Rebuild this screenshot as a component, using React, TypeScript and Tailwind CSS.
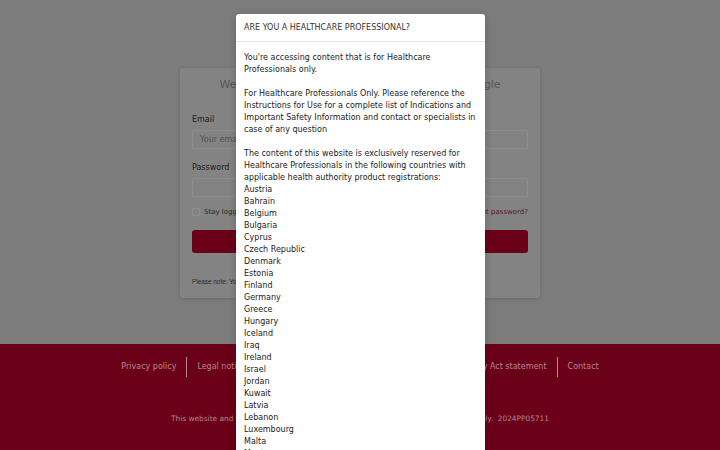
import React from 'react';

const countries = [
  'Austria', 'Bahrain', 'Belgium', 'Bulgaria', 'Cyprus', 'Czech Republic', 'Denmark', 'Estonia',
  'Finland', 'Germany', 'Greece', 'Hungary', 'Iceland', 'Iraq', 'Ireland', 'Israel', 'Jordan',
  'Kuwait', 'Latvia', 'Lebanon', 'Luxembourg', 'Malta', 'Montenegro', 'Netherlands', 'Norway',
];

const footerLinks = ['Privacy policy', 'Legal notice', 'Cookie notice', 'Cookie settings', 'Modern Slavery Act statement', 'Contact'];

function LoginCard() {
  return (
    <div className="w-[360px] h-[230px] bg-[#838383] rounded-[3px] shadow-[0_1px_4px_rgba(0,0,0,0.15)] px-[12px] pt-[11px]">
      <h1 className="text-center text-[11px] leading-[12px] text-[#575757] whitespace-nowrap">
        Welcome. Please log in with your account or Single
      </h1>

      <label className="block mt-[23px] text-[8px] leading-[12px] text-[#1c1c1c]">Email</label>
      <div className="mt-[4px] h-[19px] border border-[#8e8e8e] rounded-[2px] flex items-center px-[7px] text-[8px] text-[#525252]">
        Your email address
      </div>

      <label className="block mt-[13px] text-[8px] leading-[12px] text-[#1c1c1c]">Password</label>
      <div className="mt-[4px] h-[19px] border border-[#8e8e8e] rounded-[2px]" />

      <div className="mt-[9px] h-[12px] flex items-center justify-between text-[7px]">
        <div className="flex items-center gap-[4px] text-[#2a2a2a]">
          <span className="w-[8px] h-[8px] border border-[#909090] rounded-[1px]" />
          Stay logged in
        </div>
        <span className="text-[#5a1526]">Forgot password?</span>
      </div>

      <div className="mt-[12px] h-[23px] rounded-[3px] bg-[#6b0019] flex items-center justify-center text-[8px] text-[#7f7f7f]">
        Log in
      </div>

      <p className="mt-[25px] text-[6.4px] leading-[8px] text-[#2a2a2a] font-['Liberation_Sans',sans-serif]">
        Please note: Your account is personal and may not be shared with others.
      </p>
    </div>
  );
}

function Footer() {
  return (
    <footer className="h-[106px] bg-[#6b0019] pt-[13px]">
      <nav className="flex justify-center items-center h-[20px] text-[8px] text-[#b88490]">
        {footerLinks.map((link, i) => (
          <React.Fragment key={link}>
            {i > 0 && <span className="mx-[10px] w-px h-[20px] bg-[#b88490]" />}
            <span>{link}</span>
          </React.Fragment>
        ))}
      </nav>
      <p className="mt-[36px] text-center text-[7.4px] leading-[12px] text-[#b8808e]">
        This website and the information herein are intended for Healthcare Professionals only.&nbsp; 2024PP05711
      </p>
    </footer>
  );
}

function HcpModal() {
  return (
    <div className="absolute left-[236px] top-[14px] w-[249px] bg-white rounded-t-[3px] shadow-[0_2px_8px_rgba(0,0,0,0.2)] text-[#222]">
      <div className="h-[28px] pt-[1px] px-[8px] flex items-center border-b border-[#e6e6e6] text-[8px] text-[#333]">
        ARE YOU A HEALTHCARE PROFESSIONAL?
      </div>
      <div className="px-[8px] pt-[10px] text-[8px] leading-[12px] whitespace-nowrap">
        <p>You're accessing content that is for Healthcare</p>
        <p>Professionals only.</p>
        <br />
        <p>For Healthcare Professionals Only. Please reference the</p>
        <p>Instructions for Use for a complete list of Indications and</p>
        <p>Important Safety Information and contact or specialists in</p>
        <p>case of any question</p>
        <br />
        <p>The content of this website is exclusively reserved for</p>
        <p>Healthcare Professionals in the following countries with</p>
        <p>applicable health authority product registrations:</p>
        {countries.map(c => (
          <p key={c}>{c}</p>
        ))}
      </div>
    </div>
  );
}

export default function App() {
  return (
    <div className="relative h-[450px] overflow-hidden bg-[#7c7c7c] font-['DejaVu_Sans',sans-serif]">
      <main className="h-[344px] pt-[68px] flex justify-center">
        <LoginCard />
      </main>
      <Footer />
      <HcpModal />
    </div>
  );
}
